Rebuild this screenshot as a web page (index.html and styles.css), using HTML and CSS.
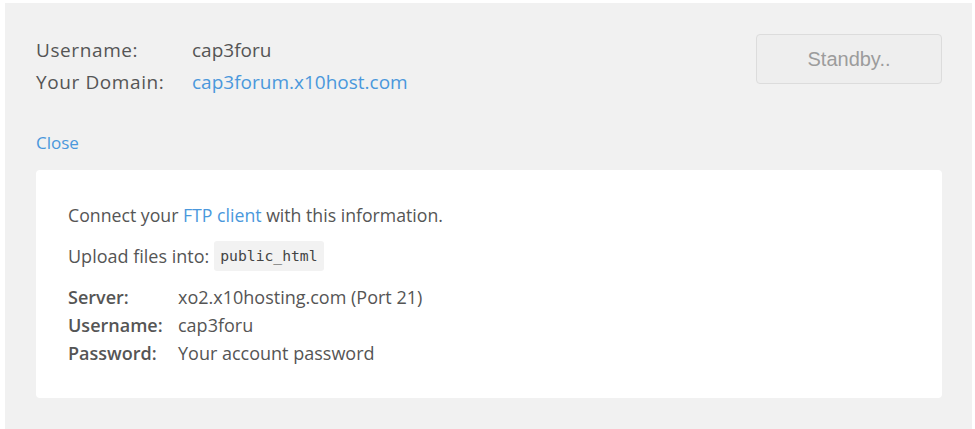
FILE: index.html
```html
<!DOCTYPE html>
<html>
<head>
<meta charset="utf-8">
<link rel="stylesheet" href="styles.css">
</head>
<body>
<div class="panel">
  <div class="header">
    <div class="info">
      <div class="info-row"><span class="info-label">Username:</span><span class="info-value">cap3foru</span></div>
      <div class="info-row"><span class="info-label">Your Domain:</span><a class="link" href="#">cap3forum.x10host.com</a></div>
    </div>
    <button class="standby">Standby..</button>
  </div>
  <a class="link close" href="#">Close</a>
  <div class="card">
    <p class="line intro">Connect your <a class="link" href="#">FTP client</a> with this information.</p>
    <p class="line upload">Upload files into: <code class="code">public_html</code></p>
    <div class="creds">
      <span class="cred-label">Server:</span><span class="cred-value">xo2.x10hosting.com (Port 21)</span>
      <span class="cred-label">Username:</span><span class="cred-value">cap3foru</span>
      <span class="cred-label">Password:</span><span class="cred-value">Your account password</span>
    </div>
  </div>
</div>
</body>
</html>
```

FILE: styles.css
```css
html, body {
  margin: 0;
  padding: 0;
  background: #ffffff;
}
body {
  font-family: "Open Sans", "Noto Sans", sans-serif;
  color: #555555;
}
.panel {
  margin: 3px 3px 0 5px;
  background: #f1f1f1;
  padding: 31px 30px 40px 31px;
  min-height: 360px;
}
.header {
  display: flex;
  justify-content: space-between;
  align-items: flex-start;
}
.info {
  font-size: 19px;
  line-height: 32px;
}
.info-row {
  display: flex;
}
.info-label {
  width: 156px;
  letter-spacing: 0.6px;
}
.link {
  color: #4a98dc;
  text-decoration: none;
}
.standby {
  width: 186px;
  height: 50px;
  margin-right: 0;
  background: #eeeeee;
  border: 1px solid #dcdcdc;
  border-radius: 4px;
  font-family: "Liberation Sans", Arial, sans-serif;
  font-size: 20px;
  color: #9c9c9c;
}
.close {
  display: block;
  margin-top: 32px;
  font-size: 17px;
  line-height: 26px;
}
.card {
  margin-top: 14px;
  background: #ffffff;
  border-radius: 4px;
  padding: 32px 32px 31px 32px;
  font-size: 18px;
}
.line {
  margin: 0;
  line-height: 26px;
}
.intro {
  font-size: 17.7px;
}
.upload {
  margin-top: 13px;
  display: flex;
  align-items: center;
  gap: 5px;
}
.code {
  font-family: "DejaVu Sans Mono", monospace;
  font-size: 14.7px;
  background: #f2f2f2;
  border-radius: 3px;
  padding: 0 6px;
  line-height: 30px;
  color: #444444;
}
.creds {
  margin-top: 12px;
  display: grid;
  grid-template-columns: 110px auto;
  line-height: 28px;
}
.cred-label {
  font-weight: 600;
}
```
